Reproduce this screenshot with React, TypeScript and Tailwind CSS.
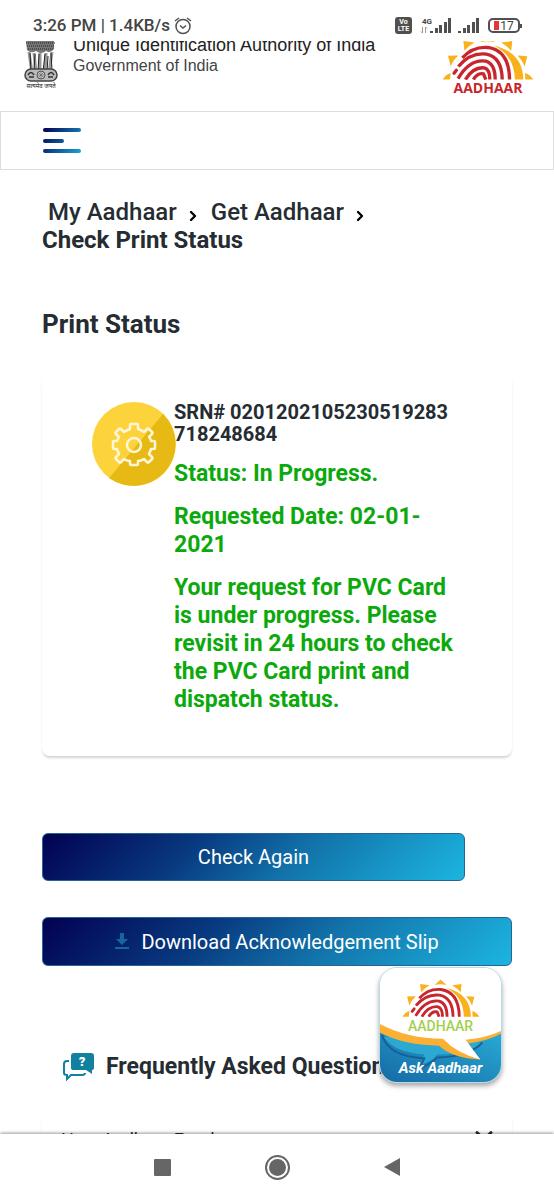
import type { ReactNode } from 'react';
import { ChevronDown, ChevronRight } from 'lucide-react';

const GRADIENT = "bg-linear-[135deg,#020151_0%,#083a80_35%,#1273aa_60%,#1cb5e0_100%]";
const CARD_SHADOW = "shadow-[0_3px_3px_-1px_rgba(0,0,0,0.16),0_1px_2px_rgba(0,0,0,0.04)]";

function AadhaarLogo({ className }: { className: string }) {
    return (
        <svg viewBox="495 106 275 134" className={className} aria-hidden="true">
            <g fill="#f9b21b">
                <path d="M497 239 Q506 223 521 219 L519 239Z" />
                <path d="M513 168 L544 167 Q527 182 521 200Z" />
                <path d="M559 124 L592 128 Q574 138 562 153Z" />
                <path d="M631 108 L652 127 Q631 122 610 127Z" />
                <path d="M705 124 L702 153 Q690 139 672 128Z" />
                <path d="M750 169 L742 200 Q735 181 721 167Z" />
                <path d="M768 239 L744 239 L743 219 Q759 224 768 239Z" />
                <path d="M650 137 Q737 158 738 239 L713 239 Q712 168 650 137Z" />
            </g>
            <g fill="none" stroke="#c9252c" strokeWidth="10">
                <path d="M556 174 Q588 139 632 143 Q696 152 697 239" />
                <path d="M544 200 Q580 157 628 163 Q674 172 675 239" />
                <path d="M543 236 Q578 177 626 184 Q654 192 654 239" />
                <path d="M565 239 Q588 200 622 204 Q638 209 638 239" />
                <path d="M589 239 Q601 218 619 222 L626 239" />
                <path d="M531 220 L538 211" strokeLinecap="round" />
            </g>
        </svg>
    );
}

function Emblem() {
    return (
        <svg viewBox="0 0 36 48" className="h-12 w-9" aria-hidden="true">
            <path d="M3 0 H31 L31 8 Q27 13 23 10 Q18 14 13 10 Q8 13 4 9Z" fill="#777" />
            <g stroke="#222" strokeWidth="1" strokeDasharray="1 1" fill="none">
                <path d="M3 2 H32 M4 5 H31 M5 8 H30" />
            </g>
            <path d="M6 11 L9 32 M11 12 L13 31 M17 12 V31 M23 12 L22 31 M29 11 L26 32" stroke="#999" strokeWidth="3" />
            <path d="M7 12 L8 31 M12 13 L11 29 M16 13 L15 31 M22 13 L20 31 M28 12 L29 30 M25 15 L24 31" stroke="#222" strokeWidth="1" />
            <rect x="2" y="28" width="32" height="12" rx="6" fill="#bbb" stroke="#444" strokeWidth="1.5" />
            <circle cx="18" cy="34" r="4" fill="#ccc" stroke="#555" />
            <path d="M18 30 V38 M14 34 H22 M15 31 L21 37 M21 31 L15 37" stroke="#666" strokeWidth="0.7" />
            <path d="M5 34 Q8 29 11 34 M6 36 H11 M25 34 Q28 29 31 34 M25 36 H30" stroke="#333" strokeWidth="1.5" fill="none" />
            <text x="18" y="47" textAnchor="middle" fontSize="6" fill="#222" fontFamily="Noto Sans, sans-serif">सत्यमेव जयते</text>
        </svg>
    );
}

function Signal() {
    return (
        <svg viewBox="0 0 22 16" className="h-4 w-[22px]" fill="#505050" aria-hidden="true">
            <rect x="0" y="13" width="3" height="2" />
            <rect x="5" y="10" width="3" height="5" />
            <rect x="9" y="7" width="3" height="8" />
            <rect x="14" y="4" width="3" height="11" />
            <rect x="18" y="0" width="3" height="15" />
        </svg>
    );
}

function StatusBar() {
    return (
        <div className="flex h-[41px] shrink-0 items-center pt-[10px] pr-[32px] pl-[33px] text-[#444]">
            <span className="text-[17px] font-medium">3:26 PM | 1.4KB/s</span>
            <svg viewBox="0 0 18 18" className="ml-1 size-[18px]" fill="none" stroke="#505050" strokeWidth="1.5" aria-hidden="true">
                <circle cx="9" cy="9.5" r="7" />
                <path d="M6 8.5 L9 11 L12 8.5 M1 4 L5 1 M17 4 L13 1" />
            </svg>
            <div className="ml-auto flex items-center">
                <div className="flex size-[17px] flex-col items-center justify-center rounded-[3px] bg-[#505050] text-[7px] leading-[7px] font-bold text-white">
                    <span>Vo</span>
                    <span>LTE</span>
                </div>
                <div className="ml-2 flex w-[14px] flex-col items-center text-[8px] leading-[8px] font-bold">
                    <span>4G</span>
                    <svg viewBox="0 0 8 8" className="size-2 self-start" fill="none" stroke="#999" aria-hidden="true">
                        <path d="M2.5 1 V7 M1 5.5 L2.5 7 M5.5 7 V1 M5.5 1 L7 2.5" />
                    </svg>
                </div>
                <div className="-ml-1">
                    <Signal />
                </div>
                <div className="ml-[6px]">
                    <Signal />
                </div>
                <div className="ml-2 flex h-[15px] w-8 items-center justify-center gap-px rounded-[5px] border-2 border-[#505050] text-[12px] leading-3">
                    <span className="h-[9px] w-[5px] bg-[#e5343b]" />
                    17
                </div>
                <span className="h-1 w-[2px] bg-[#505050]" />
            </div>
        </div>
    );
}

function Header() {
    return (
        <header className="flex h-[70px] items-start pr-[20px] pl-[23px]">
            <Emblem />
            <div className="-mt-[7px] ml-[14px] font-['Liberation_Sans',sans-serif] text-[#222]">
                <p className="text-[18px] leading-[22px]">Unique Identification Authority of India</p>
                <p className="text-[16px] leading-[20px] text-[#444]">Government of India</p>
            </div>
            <div className="-mt-[6px] ml-auto flex flex-col items-center">
                <AadhaarLogo className="h-[45px] w-[92px]" />
                <span className="font-['Open_Sans',sans-serif] text-[14px] leading-[16px] font-bold text-[#c9252c]">AADHAAR</span>
            </div>
        </header>
    );
}

function Crumb({ children }: { children: ReactNode }) {
    return (
        <li className="flex items-center">
            <a href="#" className="font-medium">{children}</a>
            <ChevronRight className="mt-2 ml-2 size-4 text-black" strokeWidth={3.5} />
        </li>
    );
}

function StatusCard() {
    return (
        <section className={`mt-[36px] flex rounded-lg pt-[27px] pr-[54px] pb-[42px] pl-[50px] ${CARD_SHADOW}`}>
            <div className="w-[82px] shrink-0 pt-px">
                <svg viewBox="0 0 84 84" className="size-[84px] max-w-none" aria-hidden="true">
                    <circle cx="42" cy="42" r="42" fill="#fdd33c" />
                    <path d="M71 12 A42 42 0 0 1 17 76Z" fill="#e7b915" />
                    <g fill="none" stroke="#fff6d8" strokeWidth="2.5" strokeLinejoin="round">
                        <path d="M38 23 Q38 22 39 22 H45 Q46 22 46 23 V27 Q50 28 52 30 L55 27 Q56 26 57 27 L60 30 Q61 31 60 32 L57 35 Q59 37 59 39 H62 Q63 39 63 40 V46 Q63 47 62 47 H59 Q58 50 57 52 L60 55 Q61 56 60 57 L57 60 Q56 61 55 60 L52 57 Q49 59 46 59 V62 Q46 63 45 63 H39 Q38 63 38 62 V59 Q35 59 32 57 L29 60 Q28 61 27 60 L24 57 Q23 56 24 55 L27 52 Q26 50 25 47 H22 Q21 47 21 46 V40 Q21 39 22 39 H25 Q26 37 27 35 L24 32 Q23 31 24 30 L27 27 Q28 26 29 27 L32 30 Q35 28 38 27Z" />
                        <circle cx="42" cy="43" r="7" />
                    </g>
                </svg>
            </div>
            <div className="min-w-0 flex-1 font-bold">
                <p className="text-[20px] leading-[22px] break-all">SRN# 0201202105230519283718248684</p>
                <div className="mt-[15px] space-y-[15px] text-[23px] leading-[28px] text-[#0ca90c]">
                    <p>Status: In Progress.</p>
                    <p>Requested Date: 02-01-2021</p>
                    <p>Your request for PVC Card is under progress. Please revisit in 24 hours to check the PVC Card print and dispatch status.</p>
                </div>
            </div>
        </section>
    );
}

function AskAadhaar() {
    return (
        <button className="absolute right-[52px] bottom-[51px] h-[116px] w-[123px] overflow-hidden rounded-[18px] border border-[#b5dcea] bg-white shadow-[0_3px_5px_rgba(0,0,0,0.35)]">
            <svg viewBox="0 0 123 116" preserveAspectRatio="none" className="absolute inset-0 size-full" aria-hidden="true">
                <defs>
                    <linearGradient id="ask" x1="0" y1="1" x2="1" y2="0">
                        <stop offset="0" stopColor="#176aa5" />
                        <stop offset="1" stopColor="#27acd5" />
                    </linearGradient>
                </defs>
                <path d="M0 62 H123 V116 H0Z" fill="url(#ask)" />
                <path d="M4 70 Q14 86 45 88 L41 98 Q54 95 58 88 Q90 88 104 76 L60 73Z" fill="#2ba9d2" />
                <path d="M2 68 Q8 90 45 92 L40 102 Q52 98 58 91 Q90 91 104 76" fill="none" stroke="#185f98" strokeWidth="2" />
                <path d="M0 57 V66 Q26 79 60 79 Q74 92 102 93 L88 77 Q108 75 123 67 V60 L60 66Z" fill="#fbb034" />
                <path d="M0 0 H123 V64 Q108 71 87 73 L102 93 Q78 87 64 72 Q28 72 0 57Z" fill="#fff" />
            </svg>
            <span className="relative flex h-full flex-col items-center pt-[11px]">
                <AadhaarLogo className="h-[38px] w-[78px]" />
                <span className="text-[14px] leading-[18px] font-medium text-[#a3cf4e]">AADHAAR</span>
                <span className="mt-auto mb-[5px] text-[15px] leading-[18px] font-bold text-white italic">Ask Aadhaar</span>
            </span>
        </button>
    );
}

function NavBar() {
    return (
        <nav className="relative flex h-[66px] shrink-0 items-center justify-center gap-[94px] bg-white shadow-[0_-1px_3px_rgba(0,0,0,0.4)]">
            <button aria-label="Recent apps" className="size-[17px] rounded-[1px] bg-[#666]" />
            <button aria-label="Home" className="size-[25px] rounded-full border-2 border-[#666] p-[2px]">
                <span className="block size-full rounded-full bg-[#666]" />
            </button>
            <button aria-label="Back">
                <svg viewBox="0 0 17 18" className="h-[18px] w-[17px]">
                    <path d="M0 9 L16 0 V18Z" fill="#666" />
                </svg>
            </button>
        </nav>
    );
}

export default function App() {
    return (
        <div className="flex h-screen flex-col bg-white font-[Roboto,sans-serif] text-[#252c32]">
            <StatusBar />
            <div className="relative min-h-0 flex-1 overflow-hidden">
                <Header />
                <div className="flex h-[59px] items-center border border-[#dedede] px-[42px]">
                    <button aria-label="Menu">
                        <svg viewBox="0 0 38 26" className="h-[26px] w-[38px]">
                            <defs>
                                <linearGradient id="menu" x1="0" y1="0" x2="38" y2="26" gradientUnits="userSpaceOnUse">
                                    <stop offset="0" stopColor="#020151" />
                                    <stop offset="1" stopColor="#1ca5d5" />
                                </linearGradient>
                            </defs>
                            <g fill="url(#menu)">
                                <rect y="0" width="38" height="4" rx="2" />
                                <rect y="11" width="21" height="4" rx="2" />
                                <rect y="21" width="38" height="4" rx="2" />
                            </g>
                        </svg>
                    </button>
                </div>
                <main className="px-[42px] pt-[28px]">
                    <ol className="flex flex-wrap pl-[6px] text-[24px] leading-[28px]">
                        <Crumb>My Aadhaar</Crumb>
                        <li className="w-[10px]" />
                        <Crumb>Get Aadhaar</Crumb>
                        <li className="-ml-[6px] w-full font-bold">Check Print Status</li>
                    </ol>
                    <h1 className="mt-[56px] text-[26px] leading-[28px] font-bold">Print Status</h1>
                    <StatusCard />
                    <button className={`mt-[77px] block h-12 w-9/10 rounded-md border border-[#2a6496] text-[20px] text-white ${GRADIENT}`}>
                        Check Again
                    </button>
                    <button className={`mt-[36px] flex h-[49px] w-full items-center justify-center gap-3 rounded-md border border-[#2a6496] text-[20px] text-white ${GRADIENT}`}>
                        <svg viewBox="0 0 14 17" className="h-[17px] w-[14px]" fill="#17659b" aria-hidden="true">
                            <path d="M5 0 H9 V6 H13 L7 12 L1 6 H5Z M0 14 H14 V16 H0Z" />
                        </svg>
                        Download Acknowledgement Slip
                    </button>
                    <h2 className="mt-[86px] flex items-center gap-3 pl-[21px] text-[23px] leading-[28px] font-bold whitespace-nowrap">
                        <svg viewBox="0 0 31 29" className="h-[29px] w-[31px] shrink-0" aria-hidden="true">
                            <path d="M6 9 H4 Q1 9 1 12 V21 Q1 23 4 23 V27 L8 23 H19 Q22 23 22 21" fill="none" stroke="#12809f" strokeWidth="2" />
                            <path d="M11 1 H28 Q31 1 31 4 V16 Q31 18 29 18 V22 L23 18 H11 Q8 18 8 16 V4 Q8 1 11 1Z" fill="#12809f" />
                            <text x="19" y="14" textAnchor="middle" fontSize="13" fontWeight="900" fill="#fff">?</text>
                        </svg>
                        Frequently Asked Questions
                    </h2>
                    <section className={`mt-[31px] rounded-lg pt-[14px] pr-[14px] pb-5 pl-[19px] ${CARD_SHADOW}`}>
                        <button className="flex w-full items-start justify-between text-[18px] leading-[28px]">
                            How Aadhaar Enrol
                            <ChevronDown className="-mt-1 size-7" strokeWidth={2.5} />
                        </button>
                    </section>
                </main>
                <AskAadhaar />
            </div>
            <NavBar />
        </div>
    );
}
